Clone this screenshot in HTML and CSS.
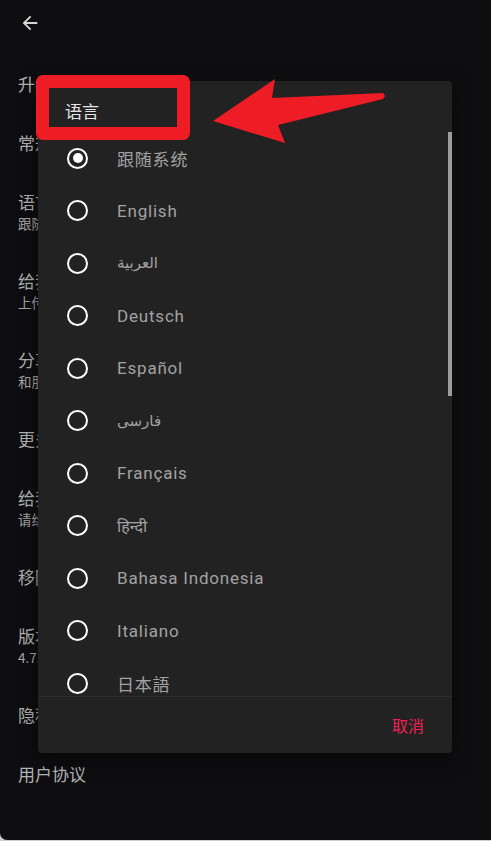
FILE: index.html
```html
<!DOCTYPE html>
<html lang="zh">
<head>
<meta charset="utf-8">
<title>设置</title>
<link rel="stylesheet" href="styles.css">
</head>
<body>
<div class="screen">
  <header class="topbar">
    <svg class="back" viewBox="0 0 24 24" width="22" height="22"><path d="M20 11H7.83l5.59-5.59L12 4l-8 8 8 8 1.41-1.41L7.83 13H20v-2z" fill="#d6d6d6"/></svg>
  </header>
  <ul class="settings">
    <li class="item"><div class="t">升级到专业版</div></li>
    <li class="item"><div class="t">常规设置</div></li>
    <li class="item"><div class="t">语言</div><div class="s">跟随系统</div></li>
    <li class="item"><div class="t">给我们评分</div><div class="s">上传您的评价帮助我们改进</div></li>
    <li class="item"><div class="t">分享应用</div><div class="s">和朋友分享这个应用</div></li>
    <li class="item"><div class="t">更多应用</div></li>
    <li class="item"><div class="t">给我们反馈</div><div class="s">请给我们发送您的建议</div></li>
    <li class="item"><div class="t">移除广告</div></li>
    <li class="item"><div class="t">版本</div><div class="s">4.7.2</div></li>
    <li class="item"><div class="t">隐私政策</div></li>
    <li class="item"><div class="t">用户协议</div></li>
  </ul>

  <div class="dialog">
    <div class="dtitle">语言</div>
    <div class="dlist">
      <div class="opt"><span class="radio on"></span><span class="lbl">跟随系统</span></div>
      <div class="opt"><span class="radio"></span><span class="lbl">English</span></div>
      <div class="opt"><span class="radio"></span><span class="lbl ar">العربية</span></div>
      <div class="opt"><span class="radio"></span><span class="lbl">Deutsch</span></div>
      <div class="opt"><span class="radio"></span><span class="lbl">Español</span></div>
      <div class="opt"><span class="radio"></span><span class="lbl ar">فارسی</span></div>
      <div class="opt"><span class="radio"></span><span class="lbl">Français</span></div>
      <div class="opt"><span class="radio"></span><span class="lbl hi">हिन्दी</span></div>
      <div class="opt"><span class="radio"></span><span class="lbl">Bahasa Indonesia</span></div>
      <div class="opt"><span class="radio"></span><span class="lbl">Italiano</span></div>
      <div class="opt"><span class="radio"></span><span class="lbl">日本語</span></div>
      <div class="thumb"></div>
    </div>
    <div class="dfoot"><span class="cancel">取消</span></div>
  </div>

  <div class="hl-box"></div>
  <svg class="hl-arrow" viewBox="0 0 491 841" width="491" height="841">
    <polygon points="213,121 275,79 272,98 383,93 385,96 383,99 278,125 285,143" fill="#ee1c25"/>
  </svg>
</div>
</body>
</html>
```
FILE: styles.css
```css
* { box-sizing: border-box; }
html, body { margin: 0; padding: 0; }
body {
  background: #cfcfcf;
  width: 491px;
  height: 841px;
  overflow: hidden;
  font-family: "Noto Sans CJK SC", Roboto, sans-serif;
}
.screen {
  position: relative;
  width: 491px;
  height: 840px;
  background: #0e0e10;
  border-bottom-left-radius: 7px;
  overflow: hidden;
}
.topbar {
  height: 54px;
  display: flex;
  align-items: center;
  padding-left: 19px;
  padding-bottom: 8px;
}
.back { display: block; }
.settings {
  list-style: none;
  margin: 0;
  padding: 0;
}
.item {
  padding: 18px 18px;
}
.item .t {
  font-size: 17px;
  line-height: 23px;
  height: 23px;
  color: #b4b4b4;
}
.item .s {
  font-size: 13.5px;
  line-height: 20px;
  height: 20px;
  color: #a8a8a8;
}
.dialog {
  position: absolute;
  left: 38px;
  top: 81px;
  width: 414px;
  height: 672px;
  background: #222222;
  border-radius: 4px;
  display: flex;
  flex-direction: column;
  box-shadow: 0 6px 20px rgba(0,0,0,0.5);
}
.dtitle {
  height: 51px;
  padding: 19px 0 0 27px;
  font-size: 17px;
  line-height: 22px;
  color: #e6e6e6;
}
.dlist {
  position: relative;
  height: 565px;
  overflow: hidden;
  border-bottom: 1px solid #2c2c2c;
}
.opt {
  height: 52.5px;
  display: flex;
  align-items: center;
  padding-left: 29px;
}
.radio {
  flex: none;
  width: 21px;
  height: 21px;
  border: 2.5px solid #ffffff;
  border-radius: 50%;
  display: flex;
  align-items: center;
  justify-content: center;
}
.radio.on::after {
  content: "";
  width: 10px;
  height: 10px;
  border-radius: 50%;
  background: #ffffff;
}
.lbl {
  margin-left: 29px;
  font-family: Roboto, "Noto Sans CJK SC", sans-serif;
  font-size: 17px;
  letter-spacing: 0.8px;
  color: #a2a2a2;
}
.lbl.ar { font-family: "DejaVu Sans", "Noto Sans", sans-serif; font-size: 15px; letter-spacing: 0; }
.lbl.hi { font-family: "Noto Sans", "DejaVu Sans", sans-serif; font-size: 16px; letter-spacing: 0; }
.thumb {
  position: absolute;
  right: 0;
  top: 0;
  width: 4px;
  height: 264px;
  background: #9c9c9c;
}
.dfoot {
  flex: 1;
  display: flex;
  align-items: center;
  justify-content: flex-end;
  padding-right: 28px;
  padding-bottom: 1px;
}
.cancel {
  font-size: 16px;
  color: #ee2155;
}
.hl-box {
  position: absolute;
  left: 36px;
  top: 75px;
  width: 154px;
  height: 65px;
  border: 13px solid #ee1c25;
  border-radius: 7px;
}
.hl-arrow {
  position: absolute;
  left: 0;
  top: 0;
  pointer-events: none;
}
```
